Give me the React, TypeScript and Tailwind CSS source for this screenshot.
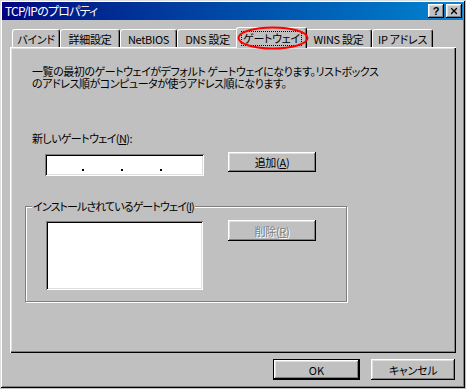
import { X } from 'lucide-react';

const raised =
  'shadow-[inset_-1px_-1px_#000,inset_1px_1px_#fff,inset_-2px_-2px_#808080,inset_2px_2px_#dfdfdf]';
const sunken =
  'shadow-[inset_1px_1px_#808080,inset_-1px_-1px_#fff,inset_2px_2px_#000,inset_-2px_-2px_#dfdfdf]';

const tabs = [
  { label: 'バインド', w: 'w-[48px]' },
  { label: '詳細設定', w: 'w-[60px]' },
  { label: 'NetBIOS', w: 'w-[57px]' },
  { label: 'DNS 設定', w: 'w-[61px]' },
  { label: 'ゲートウェイ', w: 'w-[71px]', active: true },
  { label: 'WINS 設定', w: 'w-[67px]' },
  { label: 'IP アドレス', w: 'w-[61px]' },
];

const App = () => {
  return (
    <div className="relative w-[466px] h-[389px] bg-[#c0c0c0] text-[11px] leading-[12px] text-black font-['Noto_Sans_CJK_JP',sans-serif] [font-feature-settings:'palt']">
      {/* Window frame */}
      <div className="w-[465px] h-[388px] p-[2px] shadow-[inset_1px_1px_#dfdfdf,inset_-1px_-1px_#000,inset_2px_2px_#fff,inset_-2px_-2px_#808080]">
        {/* Title bar */}
        <div className="h-[18px] flex items-center justify-between pl-[3px] pr-[1px] bg-linear-to-r from-[#000080] to-[#1084d0]">
          <span className="text-white text-[12px] tracking-[-0.8px]">TCP/IPのプロパティ</span>
          <div className="flex gap-[2px]">
            <div className={`w-[16px] h-[14px] bg-[#c0c0c0] flex items-center justify-center font-bold text-[11px] font-['Liberation_Sans',sans-serif] ${raised}`}>
              ?
            </div>
            <div className={`w-[16px] h-[14px] bg-[#c0c0c0] flex items-center justify-center ${raised}`}>
              <X size={10} strokeWidth={3} className="text-black" />
            </div>
          </div>
        </div>

        <div className="px-[8px]">
          {/* Tabs */}
          <div className="mt-[7px] h-[20px] flex items-end pl-[2px] tracking-[-0.3px]">
            {tabs.map((tab) =>
              tab.active ? (
                <div
                  key={tab.label}
                  className={`${tab.w} h-[21px] -mx-[2px] -mb-px relative z-10 bg-[#c0c0c0] rounded-t-[3px] border-l border-t border-white border-r border-r-black shadow-[inset_-1px_0_#808080] flex items-start justify-center pt-[3px]`}
                >
                  <span className="border border-dotted border-black px-[1px] pb-px">{tab.label}</span>
                </div>
              ) : (
                <div
                  key={tab.label}
                  className={`${tab.w} h-[18px] bg-[#c0c0c0] rounded-t-[3px] border-l border-t border-white border-r border-r-black shadow-[inset_-1px_0_#808080] flex items-center justify-center`}
                >
                  {tab.label}
                </div>
              )
            )}
          </div>

          {/* Panel */}
          <div className={`h-[306px] w-[446px] bg-[#c0c0c0] pl-[22px] pt-[18px] shadow-[inset_1px_1px_#fff,inset_-1px_-1px_#000,inset_-2px_-2px_#808080,inset_2px_2px_#dfdfdf]`}>
            <p className="tracking-[-0.45px]">
              一覧の最初のゲートウェイがデフォルト ゲートウェイになります。リストボックス
              <br />
              のアドレス順がコンピュータが使うアドレス順になります。
            </p>

            <div className="mt-[43px] tracking-[-0.6px]">
              新しいゲートウェイ(<u>N</u>):
            </div>

            <div className="mt-[8px] flex items-start">
              <div className={`ml-[13px] mt-[2px] w-[159px] h-[22px] bg-white flex pl-[37px] gap-[37px] ${sunken}`}>
                <div className="mt-[15px] w-[2px] h-[2px] bg-black" />
                <div className="mt-[15px] w-[2px] h-[2px] bg-black" />
                <div className="mt-[15px] w-[2px] h-[2px] bg-black" />
              </div>
              <button className={`ml-[24px] w-[88px] h-[20px] bg-[#c0c0c0] flex items-center justify-center tracking-[-0.3px] ${raised}`}>
                追加(<u>A</u>)
              </button>
            </div>

            {/* Installed gateways group */}
            <div className="relative mt-[30px] -ml-[7px] w-[322px] h-[96px] border border-[#808080] shadow-[inset_1px_1px_#fff,1px_1px_#fff]">
              <span className="absolute -top-[7px] left-[6px] px-[1px] bg-[#c0c0c0] tracking-[-0.9px]">
                インストールされているゲートウェイ(<u>I</u>)
              </span>
              <div className="flex items-start pl-[20px] pt-[14px]">
                <div className={`w-[157px] h-[69px] bg-white ${sunken}`} />
                <button
                  disabled
                  className={`ml-[25px] -mt-px w-[88px] h-[21px] bg-[#c0c0c0] flex items-center justify-center tracking-[-0.3px] text-[#808080] [text-shadow:1px_1px_0_#fff] ${raised}`}
                >
                  削除(<u>R</u>)
                </button>
              </div>
            </div>
          </div>

          {/* Dialog buttons */}
          <div className="mt-[6px] flex justify-end gap-[11px]">
            <button className="w-[87px] h-[21px] border border-black bg-[#c0c0c0]">
              <div className={`w-full h-full flex items-center justify-center ${raised}`}>OK</div>
            </button>
            <button className={`w-[84px] h-[21px] bg-[#c0c0c0] flex items-center justify-center tracking-[-0.3px] ${raised}`}>
              キャンセル
            </button>
          </div>
        </div>
      </div>

      {/* Red annotation ellipse */}
      <svg className="absolute z-20 left-[237px] top-[26px]" width="72" height="24" viewBox="0 0 72 24">
        <ellipse cx="36" cy="12" rx="34.5" ry="10.5" fill="none" stroke="#ff0000" strokeWidth="2" />
      </svg>
    </div>
  );
};

export default App;
